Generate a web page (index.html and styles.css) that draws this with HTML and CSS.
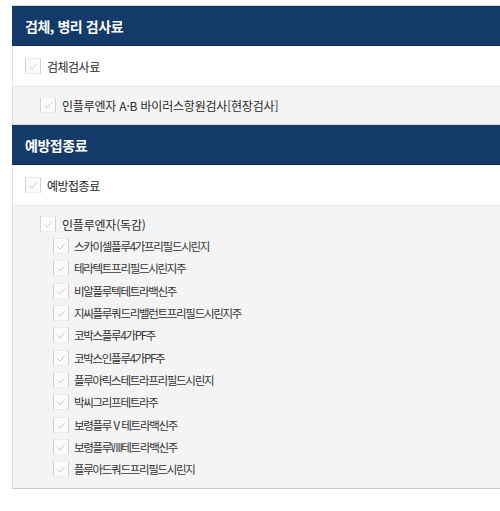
FILE: index.html
```html
<!DOCTYPE html>
<html lang="ko">
<head>
<meta charset="utf-8">
<title>검사료</title>
<link rel="stylesheet" href="styles.css">
</head>
<body>
<div class="panel">
  <div class="sec-head">검체, 병리 검사료</div>
  <div class="row lv1"><span class="cb"><svg viewBox="0 0 16 16"><path d="M4 8.5 L7 11.5 L12.5 5"/></svg></span><span class="lbl">검체검사료</span></div>
  <div class="group">
    <div class="item lv2"><span class="cb"><svg viewBox="0 0 16 16"><path d="M4 8.5 L7 11.5 L12.5 5"/></svg></span><span class="lbl">인플루엔자 A·B 바이러스항원검사[현장검사]</span></div>
  </div>

  <div class="sec-head">예방접종료</div>
  <div class="row lv1"><span class="cb"><svg viewBox="0 0 16 16"><path d="M4 8.5 L7 11.5 L12.5 5"/></svg></span><span class="lbl">예방접종료</span></div>
  <div class="group last">
    <div class="item lv2"><span class="cb"><svg viewBox="0 0 16 16"><path d="M4 8.5 L7 11.5 L12.5 5"/></svg></span><span class="lbl">인플루엔자(독감)</span></div>
    <div class="item lv3"><span class="cb"><svg viewBox="0 0 16 16"><path d="M4 8.5 L7 11.5 L12.5 5"/></svg></span><span class="lbl">스카이셀플루4가프리필드시린지</span></div>
    <div class="item lv3"><span class="cb"><svg viewBox="0 0 16 16"><path d="M4 8.5 L7 11.5 L12.5 5"/></svg></span><span class="lbl">테라텍트프리필드시린지주</span></div>
    <div class="item lv3"><span class="cb"><svg viewBox="0 0 16 16"><path d="M4 8.5 L7 11.5 L12.5 5"/></svg></span><span class="lbl">비알플루텍테트라백신주</span></div>
    <div class="item lv3"><span class="cb"><svg viewBox="0 0 16 16"><path d="M4 8.5 L7 11.5 L12.5 5"/></svg></span><span class="lbl">지씨플루쿼드리밸런트프리필드시린지주</span></div>
    <div class="item lv3"><span class="cb"><svg viewBox="0 0 16 16"><path d="M4 8.5 L7 11.5 L12.5 5"/></svg></span><span class="lbl">코박스플루4가PF주</span></div>
    <div class="item lv3"><span class="cb"><svg viewBox="0 0 16 16"><path d="M4 8.5 L7 11.5 L12.5 5"/></svg></span><span class="lbl">코박스인플루4가PF주</span></div>
    <div class="item lv3"><span class="cb"><svg viewBox="0 0 16 16"><path d="M4 8.5 L7 11.5 L12.5 5"/></svg></span><span class="lbl">플루아릭스테트라프리필드시린지</span></div>
    <div class="item lv3"><span class="cb"><svg viewBox="0 0 16 16"><path d="M4 8.5 L7 11.5 L12.5 5"/></svg></span><span class="lbl">박씨그리프테트라주</span></div>
    <div class="item lv3"><span class="cb"><svg viewBox="0 0 16 16"><path d="M4 8.5 L7 11.5 L12.5 5"/></svg></span><span class="lbl">보령플루Ⅴ테트라백신주</span></div>
    <div class="item lv3"><span class="cb"><svg viewBox="0 0 16 16"><path d="M4 8.5 L7 11.5 L12.5 5"/></svg></span><span class="lbl">보령플루Ⅷ테트라백신주</span></div>
    <div class="item lv3"><span class="cb"><svg viewBox="0 0 16 16"><path d="M4 8.5 L7 11.5 L12.5 5"/></svg></span><span class="lbl">플루아드쿼드프리필드시린지</span></div>
  </div>
</div>
</body>
</html>
```
FILE: styles.css
```css
html, body {
  margin: 0;
  padding: 0;
  overflow: hidden;
  background: #ffffff;
}

body {
  font-family: "Noto Sans CJK KR", "Noto Sans", sans-serif;
  color: #2a2a2a;
}

.panel {
  margin: 5px 0 0 12px;
  width: 520px;
}

.sec-head {
  height: 39px;
  border-top: 1px solid #d8d8d8;
  border-bottom: 1px solid #0c2a52;
  background: #143a6a;
  color: #ffffff;
  font-size: 14px;
  font-weight: 700;
  letter-spacing: -0.45px;
  padding-left: 13px;
  display: flex;
  align-items: center;
}

.row {
  height: 40px;
  background: #ffffff;
  border-left: 1px solid #e4e4e4;
  border-bottom: 1px solid #e6e6e6;
  display: flex;
  align-items: center;
}

.group {
  background: #f4f4f4;
  border-left: 1px solid #dcdcdc;
  padding: 7px 0 8px;
  display: flex;
  flex-direction: column;
}

.group.last {
  border-bottom: 1px solid #c6c6c6;
  box-shadow: 0 1px 0 #e2e2e2;
}

.item {
  display: flex;
  align-items: center;
}

.lv1 {
  padding-left: 12px;
  font-size: 12px;
  letter-spacing: -0.5px;
}

.lv2 {
  height: 22px;
  padding-left: 27px;
  font-size: 12px;
  letter-spacing: -0.2px;
}

.lv3 {
  height: 22.3px;
  padding-left: 40px;
  font-size: 11.5px;
  letter-spacing: -1.3px;
  color: #333333;
}

.cb {
  box-sizing: border-box;
  width: 16px;
  height: 16px;
  flex: none;
  border-left: 1px solid #d2d2d2;
  border-right: 1px solid #d2d2d2;
  border-top: 1px solid #ececec;
  border-bottom: 1px solid #ececec;
  background: #fbfbfb;
  display: flex;
  align-items: center;
  justify-content: center;
  margin-right: 6px;
}

.lv3 .cb {
  margin-right: 5px;
}

.cb svg {
  width: 14px;
  height: 14px;
  fill: none;
  stroke: #c9c9c9;
  stroke-width: 1.1;
}

.lbl {
  white-space: nowrap;
}
```
